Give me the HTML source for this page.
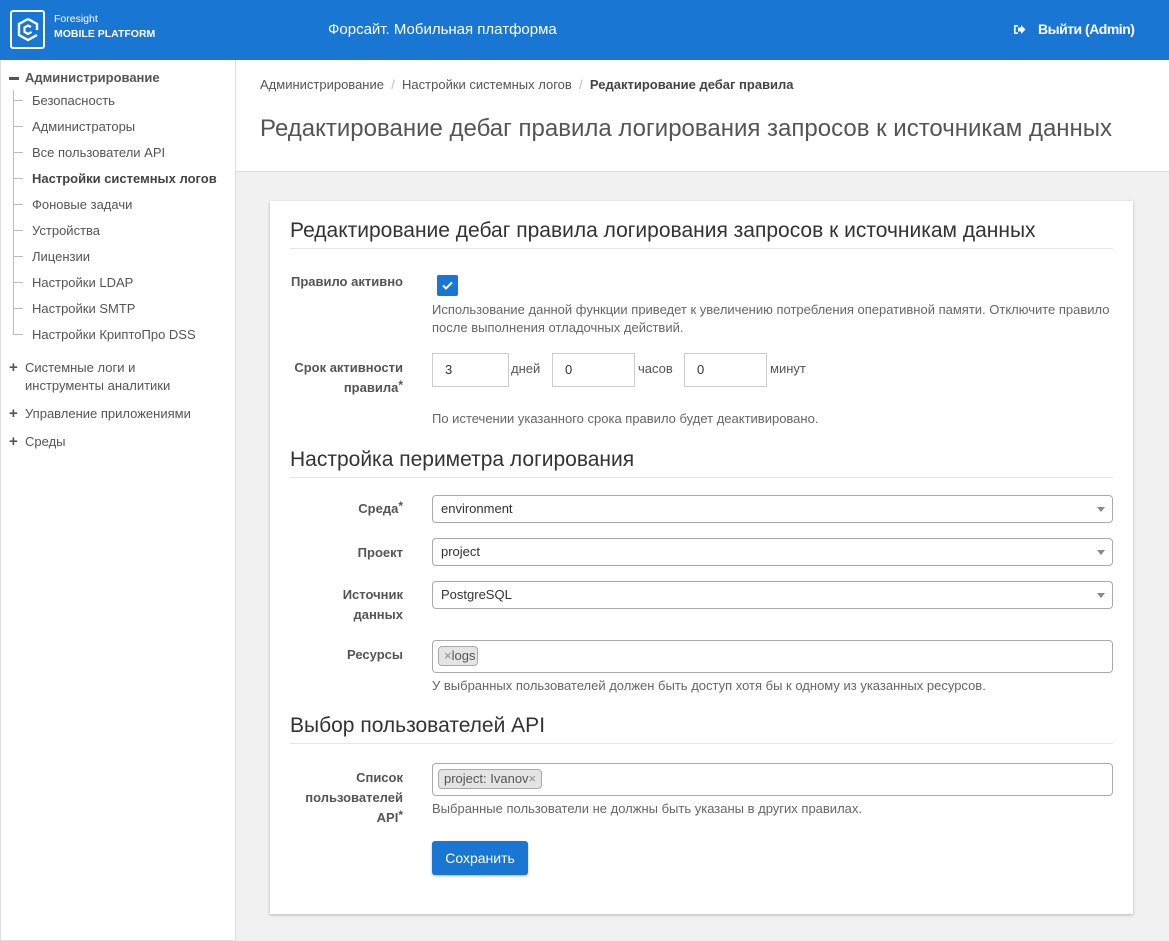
<!DOCTYPE html>
<html><head><meta charset="utf-8"><style>
*{box-sizing:border-box;margin:0;padding:0}
body{width:1169px;height:941px;position:relative;font-family:"Liberation Sans",sans-serif;background:#f1f1f1;color:#333;overflow:hidden;font-size:13px}
.a{position:absolute}
#hdr{left:0;top:0;width:1169px;height:60px;background:#1976d2;color:#fff}
#side{left:0;top:60px;width:236px;height:881px;background:#fff;border-right:1px solid #ddd;border-left:1px solid #ddd;border-bottom:1px solid #ddd}
.si{position:absolute;left:31px;color:#555;font-size:13px}
.tick{position:absolute;left:12px;width:10px;border-top:1px solid #bbb}
#top{left:236px;top:60px;width:933px;height:112px;background:#fff;border-bottom:1px solid #ddd}
#card{left:270px;top:201px;width:863px;height:713px;background:#fff;box-shadow:0 1px 3px rgba(0,0,0,.25)}
h3{position:absolute;left:20px;font-weight:normal;font-size:21px;color:#333;width:823px;border-bottom:1px solid #e5e5e5;padding-bottom:5px}
.lb{position:absolute;right:730px;text-align:right;font-weight:bold;color:#555;font-size:13px;line-height:20px}
.lb sup{font-size:12px;vertical-align:top;position:relative;top:-3px}
.hint{position:absolute;left:162px;color:#666;font-size:13px;line-height:18px}
.inp{position:absolute;border:1px solid #ccc;background:#fff;height:34px;padding-left:12px;line-height:32px;font-size:13px;color:#333}
.sel{position:absolute;left:162px;width:681px;height:28px;border:1px solid #aaa;border-radius:4px;padding-left:8px;line-height:26px;font-size:13px}
.sel:after{content:"";position:absolute;right:7px;top:11px;border-left:4px solid transparent;border-right:4px solid transparent;border-top:5px solid #888}
.tag{display:inline-block;background:#e4e4e4;border:1px solid #aaa;border-radius:4px;padding:0 5px;line-height:18px;margin:5px 0 0 5px;color:#555}
</style></head><body>
<div id="hdr" class="a">
 <div class="a" style="left:10px;top:10px;width:35px;height:39px;border:2px solid #fff;border-radius:3px"></div>
 <svg class="a" style="left:16px;top:17px" width="24" height="26" viewBox="0 0 24 26"><path d="M12 2 L21 7 L21 13 M21 18 L12 23 L3 18 L3 7 L12 2" fill="none" stroke="#fff" stroke-width="2.4"/><path d="M15 10 L12 8.5 L8.5 10.5 L8.5 15 L12 17 L15.5 15" fill="none" stroke="#fff" stroke-width="2.2"/></svg>
 <div class="a" style="left:54px;top:13px;font-size:10.5px">Foresight</div>
 <div class="a" style="left:54px;top:28px;font-size:10.5px;font-weight:bold">MOBILE PLATFORM</div>
 <div class="a" style="left:328px;top:21px;font-size:15px">Форсайт. Мобильная платформа</div>
 <svg class="a" style="left:1013px;top:24px" width="13" height="11" viewBox="0 0 13 11"><path d="M1 1h4v1.6H2.6v5.8H5V10H1z" fill="#fff"/><path d="M5 3.5h3V1l4.5 4.5L8 10V7.5H5z" fill="#fff"/></svg>
 <div class="a" style="left:1038px;top:21px;font-size:14px;font-weight:bold;letter-spacing:-0.5px">Выйти (Admin)</div>
</div>
<div id="side" class="a">
 <div class="a" style="left:8px;top:17px;width:10px;height:3px;background:#555"></div>
 <div class="a" style="left:24px;top:10px;font-weight:bold;color:#555">Администрирование</div>
 <div class="a" style="left:12px;top:30px;height:245px;border-left:1px solid #bbb"></div>
 <div class="tick" style="top:40px"></div><div class="si" style="top:33px">Безопасность</div>
 <div class="tick" style="top:66px"></div><div class="si" style="top:59px">Администраторы</div>
 <div class="tick" style="top:92px"></div><div class="si" style="top:85px">Все пользователи API</div>
 <div class="tick" style="top:118px"></div><div class="si" style="top:111px;font-weight:bold;color:#444">Настройки системных логов</div>
 <div class="tick" style="top:144px"></div><div class="si" style="top:137px">Фоновые задачи</div>
 <div class="tick" style="top:170px"></div><div class="si" style="top:163px">Устройства</div>
 <div class="tick" style="top:196px"></div><div class="si" style="top:189px">Лицензии</div>
 <div class="tick" style="top:222px"></div><div class="si" style="top:215px">Настройки LDAP</div>
 <div class="tick" style="top:248px"></div><div class="si" style="top:241px">Настройки SMTP</div>
 <div class="tick" style="top:274px"></div><div class="si" style="top:267px">Настройки КриптоПро DSS</div>
 <div class="a" style="left:8px;top:299px;font-weight:bold;color:#555;font-size:15px">+</div>
 <div class="a" style="left:24px;top:299px;color:#555;line-height:18px">Системные логи и<br>инструменты аналитики</div>
 <div class="a" style="left:8px;top:345px;font-weight:bold;color:#555;font-size:15px">+</div>
 <div class="a" style="left:24px;top:346px;color:#555">Управление приложениями</div>
 <div class="a" style="left:8px;top:373px;font-weight:bold;color:#555;font-size:15px">+</div>
 <div class="a" style="left:24px;top:374px;color:#555">Среды</div>
</div>
<div id="top" class="a">
 <div class="a" style="left:24px;top:17px;color:#555">Администрирование &nbsp;<span style="color:#bbb">/</span>&nbsp; Настройки системных логов &nbsp;<span style="color:#bbb">/</span>&nbsp; <b style="color:#444">Редактирование дебаг правила</b></div>
 <div class="a" style="left:24px;top:55px;font-size:24px;color:#555">Редактирование дебаг правила логирования запросов к источникам данных</div>
</div>
<div id="card" class="a">
 <h3 style="top:18px">Редактирование дебаг правила логирования запросов к источникам данных</h3>
 <div class="lb" style="top:71px">Правило активно</div>
 <div class="a" style="left:167px;top:74px;width:21px;height:21px;background:#1976d2;border-radius:2px"><svg width="21" height="21"><path d="M6 10.5l3 3 6-6" fill="none" stroke="#fff" stroke-width="2"/></svg></div>
 <div class="hint" style="top:100px">Использование данной функции приведет к увеличению потребления оперативной памяти. Отключите правило<br>после выполнения отладочных действий.</div>
 <div class="lb" style="top:157px">Срок активности<br>правила<sup>*</sup></div>
 <div class="inp" style="left:162px;top:152px;width:77px">3</div>
 <div class="a" style="left:241px;top:160px;color:#555">дней</div>
 <div class="inp" style="left:282px;top:152px;width:83px">0</div>
 <div class="a" style="left:368px;top:160px;color:#555">часов</div>
 <div class="inp" style="left:414px;top:152px;width:83px">0</div>
 <div class="a" style="left:500px;top:160px;color:#555">минут</div>
 <div class="hint" style="top:209px">По истечении указанного срока правило будет деактивировано.</div>
 <h3 style="top:247px">Настройка периметра логирования</h3>
 <div class="lb" style="top:298px">Среда<sup>*</sup></div>
 <div class="sel" style="top:294px">environment</div>
 <div class="lb" style="top:342px">Проект</div>
 <div class="sel" style="top:337px">project</div>
 <div class="lb" style="top:384px">Источник<br>данных</div>
 <div class="sel" style="top:380px">PostgreSQL</div>
 <div class="lb" style="top:444px">Ресурсы</div>
 <div class="a" style="left:162px;top:439px;width:681px;height:33px;border:1px solid #aaa;border-radius:4px"><span class="tag" style="padding:0 2px 0 5px"><span style="color:#888">×</span>logs</span></div>
 <div class="hint" style="top:476px">У выбранных пользователей должен быть доступ хотя бы к одному из указанных ресурсов.</div>
 <h3 style="top:513px">Выбор пользователей API</h3>
 <div class="lb" style="top:567px;line-height:20px">Список<br>пользователей<br>API<sup>*</sup></div>
 <div class="a" style="left:162px;top:562px;width:681px;height:33px;border:1px solid #aaa;border-radius:4px"><span class="tag">project: Ivanov<span style="color:#888">×</span></span></div>
 <div class="hint" style="top:599px">Выбранные пользователи не должны быть указаны в других правилах.</div>
 <div class="a" style="left:162px;top:640px;width:96px;height:34px;background:#1976d2;border-radius:3px;color:#fff;font-size:14px;text-align:center;line-height:34px;box-shadow:0 1px 2px rgba(0,0,0,.3)">Сохранить</div>
</div>
</body></html>
